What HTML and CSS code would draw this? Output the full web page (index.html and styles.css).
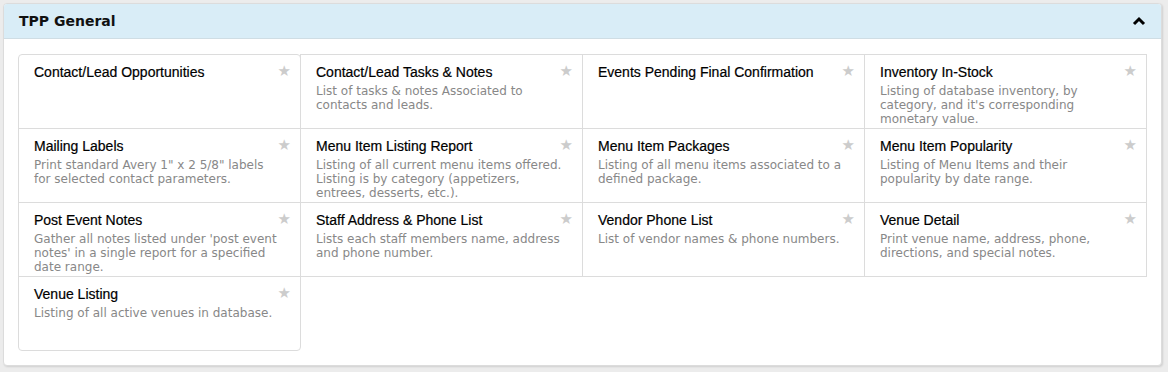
FILE: index.html
```html
<!DOCTYPE html>
<html lang="en">
<head>
    <meta charset="UTF-8">
    <meta name="viewport" content="width=device-width, initial-scale=1.0">
    <title>Reports - TPP General</title>
    <link rel="stylesheet" href="styles.css">
</head>
<body>
    <div class="panel">
        <div class="panel-heading">
            <h2>TPP General</h2>
            <svg class="chevron" width="14" height="10" viewBox="0 0 14 10">
                <path d="M2 8 L7 3 L12 8" fill="none" stroke="#000" stroke-width="3"/>
            </svg>
        </div>

        <div class="panel-body">
            <div class="report-grid">
                <div class="report">
                    <div class="report-title">Contact/Lead Opportunities</div>
                    <span class="star">&#9733;</span>
                </div>
                <div class="report">
                    <div class="report-title">Contact/Lead Tasks &amp; Notes</div>
                    <div class="report-desc">List of tasks &amp; notes Associated to contacts and leads.</div>
                    <span class="star">&#9733;</span>
                </div>
                <div class="report">
                    <div class="report-title">Events Pending Final Confirmation</div>
                    <span class="star">&#9733;</span>
                </div>
                <div class="report">
                    <div class="report-title">Inventory In-Stock</div>
                    <div class="report-desc">Listing of database inventory, by category, and it's corresponding monetary value.</div>
                    <span class="star">&#9733;</span>
                </div>

                <div class="report">
                    <div class="report-title">Mailing Labels</div>
                    <div class="report-desc">Print standard Avery 1" x 2 5/8" labels for selected contact parameters.</div>
                    <span class="star">&#9733;</span>
                </div>
                <div class="report">
                    <div class="report-title">Menu Item Listing Report</div>
                    <div class="report-desc">Listing of all current menu items offered. Listing is by category (appetizers, entrees, desserts, etc.).</div>
                    <span class="star">&#9733;</span>
                </div>
                <div class="report">
                    <div class="report-title">Menu Item Packages</div>
                    <div class="report-desc">Listing of all menu items associated to a defined package.</div>
                    <span class="star">&#9733;</span>
                </div>
                <div class="report">
                    <div class="report-title">Menu Item Popularity</div>
                    <div class="report-desc">Listing of Menu Items and their popularity by date range.</div>
                    <span class="star">&#9733;</span>
                </div>

                <div class="report">
                    <div class="report-title">Post Event Notes</div>
                    <div class="report-desc">Gather all notes listed under 'post event notes' in a single report for a specified date range.</div>
                    <span class="star">&#9733;</span>
                </div>
                <div class="report">
                    <div class="report-title">Staff Address &amp; Phone List</div>
                    <div class="report-desc">Lists each staff members name, address and phone number.</div>
                    <span class="star">&#9733;</span>
                </div>
                <div class="report">
                    <div class="report-title">Vendor Phone List</div>
                    <div class="report-desc">List of vendor names &amp; phone numbers.</div>
                    <span class="star">&#9733;</span>
                </div>
                <div class="report">
                    <div class="report-title">Venue Detail</div>
                    <div class="report-desc">Print venue name, address, phone, directions, and special notes.</div>
                    <span class="star">&#9733;</span>
                </div>

                <div class="report">
                    <div class="report-title">Venue Listing</div>
                    <div class="report-desc">Listing of all active venues in database.</div>
                    <span class="star">&#9733;</span>
                </div>
            </div>
        </div>
    </div>
</body>
</html>
```

FILE: styles.css
```css
* {
    margin: 0;
    padding: 0;
    box-sizing: border-box;
}

body {
    background: #ececec;
    padding: 3px 6px 6px 3px;
    font-family: 'DejaVu Sans', Verdana, sans-serif;
}

.panel {
    background: #fff;
    border: 1px solid #dcdcdc;
    border-radius: 4px;
    box-shadow: 1px 1px 2px rgba(0, 0, 0, 0.12);
    overflow: hidden;
}

.panel-heading {
    display: flex;
    align-items: center;
    justify-content: space-between;
    height: 35px;
    padding: 0 15px 0 15px;
    background: #d9edf7;
    border-bottom: 1px solid #cfdde4;
}

.panel-heading h2 {
    font-size: 14px;
    font-weight: bold;
    color: #111;
}

.chevron {
    display: block;
}

.panel-body {
    padding: 15px 15px 15px 14px;
}

.report-grid {
    display: grid;
    grid-template-columns: repeat(4, 282px);
}

.report {
    position: relative;
    height: 75px;
    margin: 0 -1px -1px 0;
    padding: 9px 18px 0 15px;
    border: 1px solid #dcdcdc;
}

.report:first-child {
    border-top-left-radius: 4px;
    border-top-right-radius: 4px;
}

.report:last-child {
    border-bottom-left-radius: 4px;
    border-bottom-right-radius: 4px;
}

.report-title {
    font-family: 'Liberation Sans', Arial, sans-serif;
    font-size: 14px;
    line-height: 17px;
    color: #000;
    -webkit-text-stroke: 0.2px #000;
}

.report-desc {
    margin-top: 3px;
    font-size: 12px;
    line-height: 14px;
    color: #888;
}

.star {
    position: absolute;
    top: 7px;
    right: 9px;
    font-size: 15px;
    color: #ccc;
}
```
